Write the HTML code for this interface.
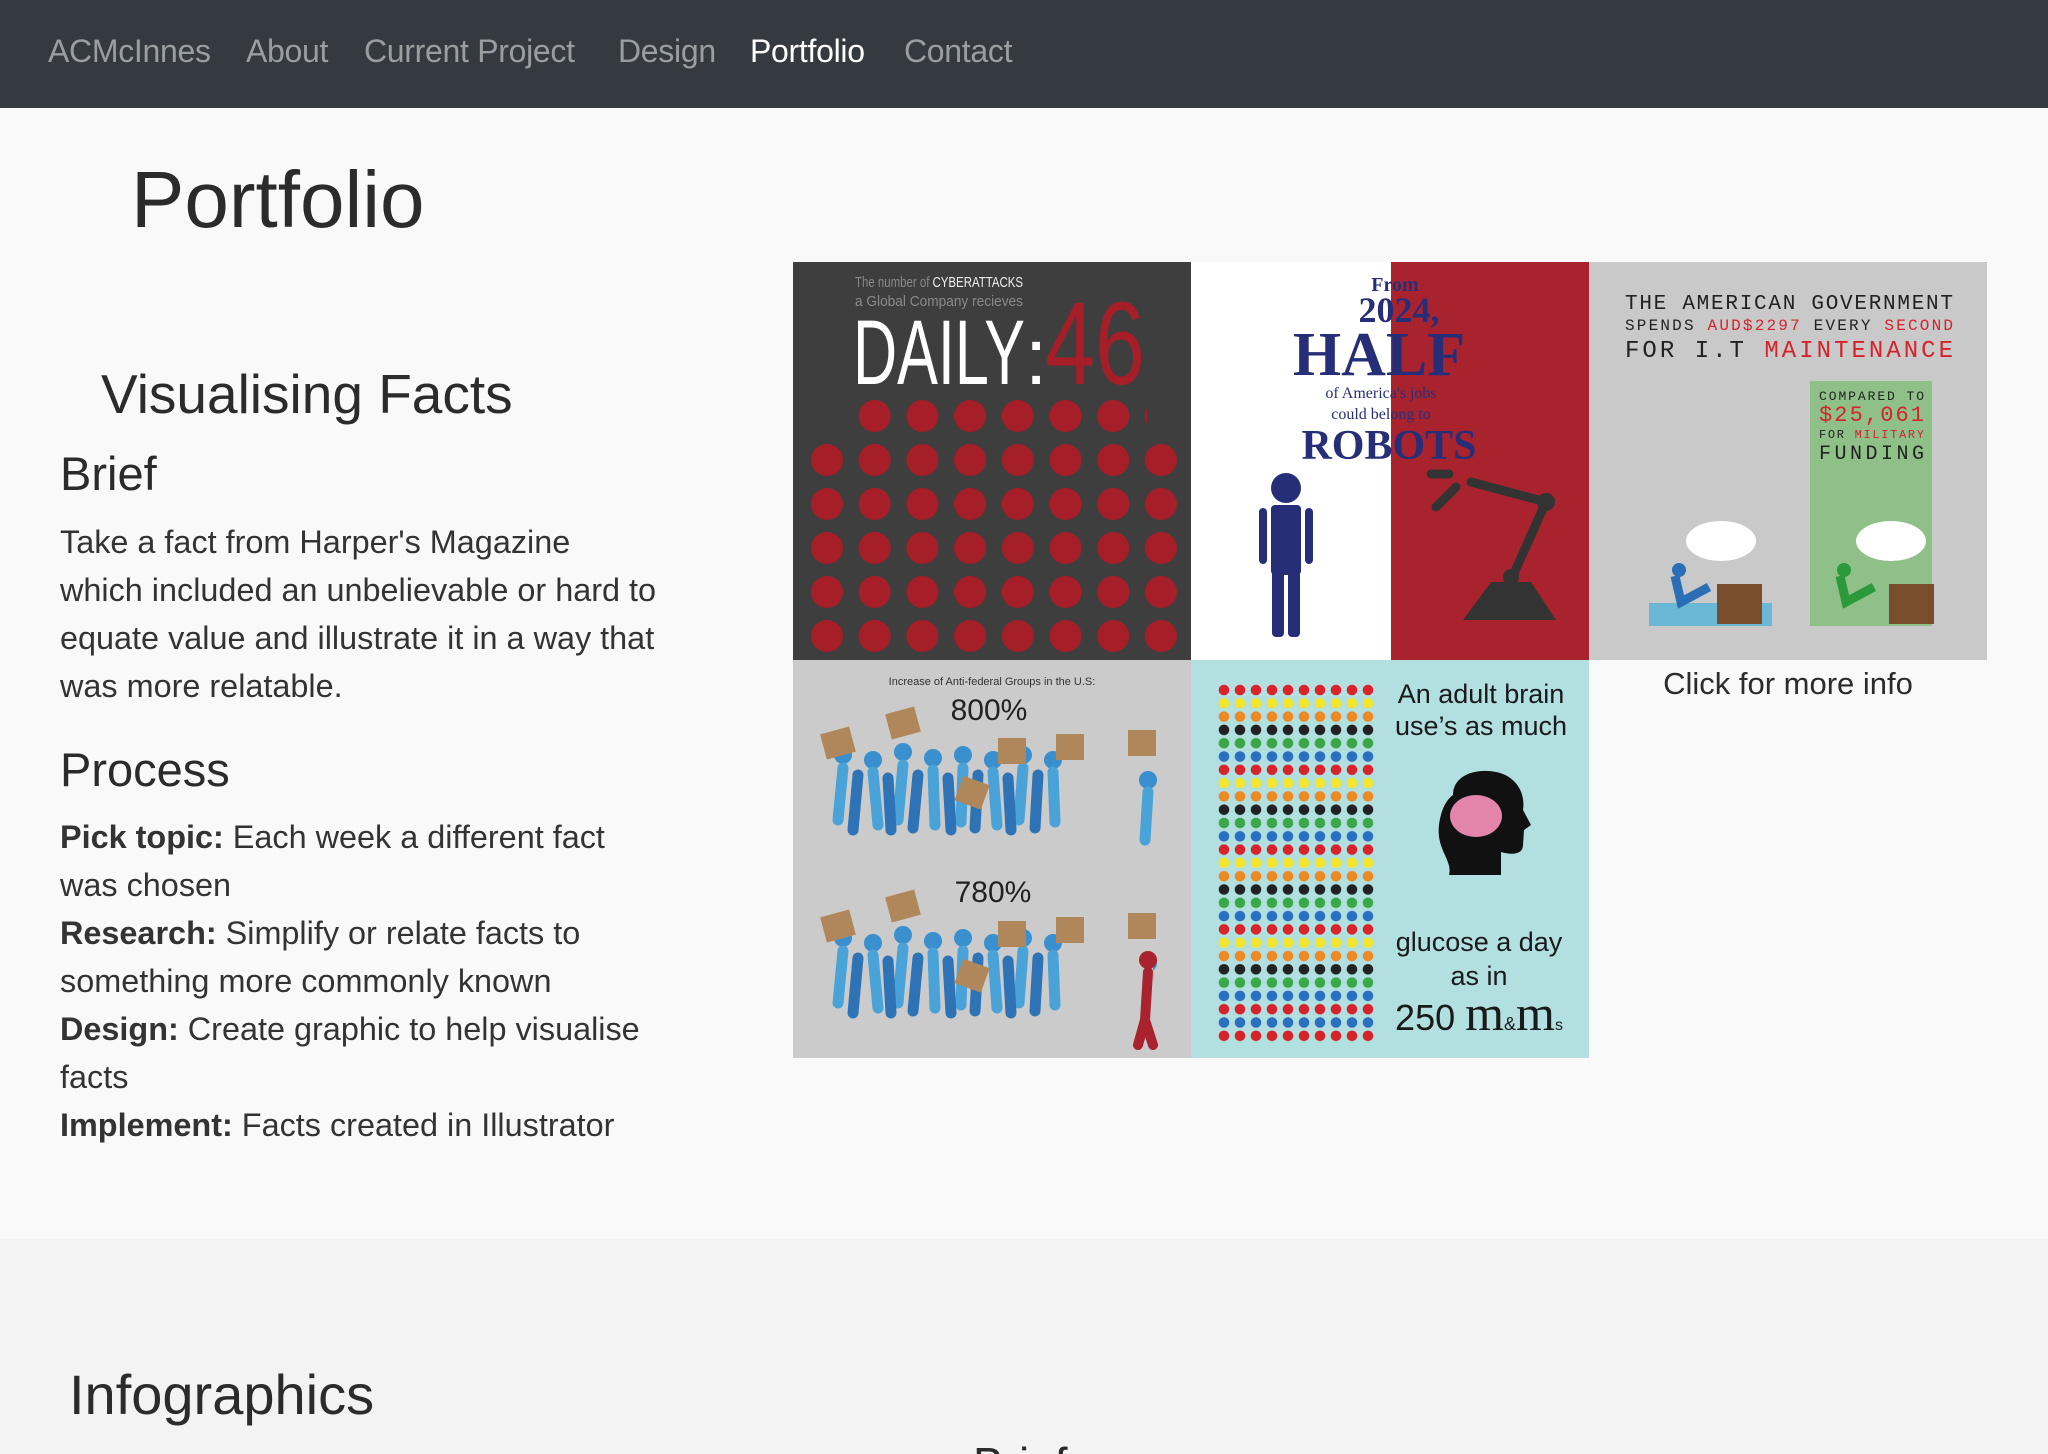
<!DOCTYPE html>
<html><head><meta charset="utf-8">
<style>
*{margin:0;padding:0;box-sizing:border-box}
html,body{width:2048px;height:1454px;overflow:hidden}
body{background:#f9f9f9;font-family:"Liberation Sans",sans-serif;color:#2b2b2b;position:relative}
.nav{position:absolute;left:0;top:0;width:2048px;height:108px;background:#343a40}
.nav span{position:absolute;top:33px;font-size:32px;color:#9b9ea1;white-space:nowrap;letter-spacing:-0.3px}
.nav span.a{color:#fff}
.abs{position:absolute;white-space:nowrap}
h1{position:absolute;left:131px;top:154px;font-size:80px;font-weight:normal;color:#2b2b2b}
.p{position:absolute;left:60px;font-size:32.4px;line-height:48px;color:#333;white-space:nowrap}
.p b{font-weight:bold}
.tile{position:absolute;width:398px;height:398px}
.lower{position:absolute;left:0;top:1239px;width:2048px;height:215px;background:#f3f3f3}
</style></head><body>
<div class="nav">
<span style="left:48px">ACMcInnes</span>
<span style="left:246px">About</span>
<span style="left:364px">Current Project</span>
<span style="left:618px">Design</span>
<span class="a" style="left:750px">Portfolio</span>
<span style="left:904px">Contact</span>
</div>
<h1>Portfolio</h1>
<div class="abs" style="left:101px;top:362px;font-size:55px;color:#2b2b2b">Visualising Facts</div>
<div class="abs" style="left:60px;top:446px;font-size:47px;color:#2b2b2b">Brief</div>
<div class="p" style="top:518px">Take a fact from Harper's Magazine<br>which included an unbelievable or hard to<br>equate value and illustrate it in a way that<br>was more relatable.</div>
<div class="abs" style="left:60px;top:742px;font-size:47px;color:#2b2b2b">Process</div>
<div class="p" style="top:813px"><b>Pick topic:</b> Each week a different fact<br>was chosen<br><b>Research:</b> Simplify or relate facts to<br>something more commonly known<br><b>Design:</b> Create graphic to help visualise<br>facts<br><b>Implement:</b> Facts created in Illustrator</div>

<!-- tile 1 -->
<svg class="tile" style="left:793px;top:262px" viewBox="0 0 398 398">
<defs><pattern id="gp" x="17" y="0" width="47.7" height="44" patternUnits="userSpaceOnUse"><circle cx="17" cy="22" r="16" fill="#a61e27"/></pattern></defs>
<rect width="398" height="398" fill="#3e3e3e"/>
<text x="62" y="25" font-family="Liberation Sans" font-size="15" fill="#8a8a8a" textLength="168" lengthAdjust="spacingAndGlyphs">The number of <tspan fill="#eee">CYBERATTACKS</tspan></text>
<text x="62" y="44" font-family="Liberation Sans" font-size="15" fill="#8a8a8a" textLength="168" lengthAdjust="spacingAndGlyphs">a Global Company recieves</text>
<text x="60" y="122" font-family="Liberation Sans" font-size="92" fill="#fff" textLength="172" lengthAdjust="spacingAndGlyphs">DAILY</text>
<text x="232" y="122" font-family="Liberation Sans" font-size="80" fill="#fff">:</text>
<text x="252" y="122" font-family="Liberation Sans" font-size="118" fill="#a61e27" textLength="100" lengthAdjust="spacingAndGlyphs">46</text>
<rect x="64" y="131" width="290" height="44" fill="url(#gp)"/>
<rect x="17" y="175" width="375" height="222" fill="url(#gp)"/>
</svg>

<!-- tile 2 -->
<svg class="tile" style="left:1191px;top:262px" viewBox="0 0 398 398">
<rect width="398" height="398" fill="#fff"/>
<rect x="200" width="198" height="398" fill="#a8232d"/>
<g font-family="Liberation Serif" fill="#272e78" text-anchor="middle" font-weight="bold">
<text x="204" y="29" font-size="20">From</text>
<text x="208" y="60" font-size="36">2024,</text>
<text x="188" y="113" font-size="62">HALF</text>
<text x="190" y="136" font-size="16" font-weight="normal">of America's jobs</text>
<text x="190" y="157" font-size="16" font-weight="normal">could belong to</text>
<text x="198" y="197" font-size="42">ROBOTS</text>
</g>
<g fill="#272e78"><circle cx="95" cy="226" r="15"/><rect x="80" y="243" width="30" height="70" rx="4"/><rect x="68" y="246" width="8" height="56" rx="4"/><rect x="114" y="246" width="8" height="56" rx="4"/><rect x="81" y="305" width="12" height="70" rx="4"/><rect x="97" y="305" width="12" height="70" rx="4"/></g>
<g stroke="#333" stroke-width="9" fill="none" stroke-linecap="round"><path d="M280 220 L355 240 L320 318"/><path d="M265 225 L245 245 M258 212 L240 212"/></g>
<circle cx="355" cy="240" r="9" fill="#333"/><circle cx="320" cy="315" r="8" fill="#333"/>
<path d="M300 320 L340 320 L365 358 L272 358 Z" fill="#333"/>
</svg>

<!-- tile 3 -->
<svg class="tile" style="left:1589px;top:262px" viewBox="0 0 398 398">
<rect width="398" height="398" fill="#c9c9c9"/>
<g font-family="Liberation Mono">
<text x="36" y="47" font-size="21" fill="#222" textLength="328">THE AMERICAN GOVERNMENT</text>
<text x="36" y="68" font-size="16" fill="#222" textLength="328">SPENDS <tspan fill="#d6222b">AUD$2297</tspan> EVERY <tspan fill="#d6222b">SECOND</tspan></text>
<text x="36" y="95" font-size="24" fill="#222" textLength="328">FOR I.T <tspan fill="#d6222b">MAINTENANCE</tspan></text>
</g>
<rect x="221" y="119" width="122" height="245" fill="#8fc088"/>
<rect x="60" y="341" width="123" height="23" fill="#6bb8d6"/>
<g font-family="Liberation Mono">
<text x="230" y="138" font-size="13" fill="#222" textLength="105">COMPARED TO</text>
<text x="230" y="159" font-size="22" fill="#d6222b" textLength="105">$25,061</text>
<text x="230" y="176" font-size="12" fill="#222" textLength="105">FOR <tspan fill="#d6222b">MILITARY</tspan></text>
<text x="230" y="197" font-size="20" fill="#222" textLength="105">FUNDING</text>
</g>
<ellipse cx="132" cy="279" rx="35" ry="20" fill="#fff"/><ellipse cx="302" cy="279" rx="35" ry="20" fill="#fff"/>
<rect x="128" y="322" width="45" height="40" fill="#7a4e2d"/><rect x="300" y="322" width="45" height="40" fill="#7a4e2d"/>
<circle cx="90" cy="308" r="7" fill="#2a6fb6"/><path d="M86 314 L92 340 L120 325" stroke="#2a6fb6" stroke-width="9" fill="none"/>
<circle cx="255" cy="308" r="7" fill="#2c9a3a"/><path d="M251 314 L257 340 L285 325" stroke="#2c9a3a" stroke-width="9" fill="none"/>
</svg>

<!-- tile 4 -->
<svg class="tile" style="left:793px;top:660px" viewBox="0 0 398 398">
<rect width="398" height="398" fill="#cbcbcb"/>
<text x="199" y="25" font-size="11" text-anchor="middle" fill="#333" font-family="Liberation Sans">Increase of Anti-federal Groups in the U.S:</text>
<text x="196" y="60" font-size="30" text-anchor="middle" fill="#222" font-family="Liberation Sans">800%</text>
<text x="200" y="242" font-size="30" text-anchor="middle" fill="#222" font-family="Liberation Sans">780%</text>
<g id="crowd">
<g fill="#3a8fcf"><circle cx="50" cy="95" r="9"/><circle cx="80" cy="100" r="9"/><circle cx="110" cy="92" r="9"/><circle cx="140" cy="98" r="9"/><circle cx="170" cy="95" r="9"/><circle cx="200" cy="100" r="9"/><circle cx="230" cy="95" r="9"/><circle cx="260" cy="100" r="9"/><circle cx="355" cy="120" r="9"/></g>
<g stroke-width="11" stroke-linecap="round" fill="none">
<path d="M50 108 L45 160 M80 112 L85 165 M110 105 L105 160 M140 110 L142 165 M170 108 L168 162 M200 112 L204 165 M230 108 L226 160 M260 112 L262 162 M355 132 L352 180" stroke="#4aa3d8"/>
<path d="M65 115 L60 170 M95 118 L98 170 M125 115 L120 168 M155 118 L158 170 M185 115 L182 168 M215 118 L218 170 M245 115 L242 168" stroke="#2e73b5"/>
</g>
<g fill="#b0875b"><rect x="30" y="70" width="30" height="26" transform="rotate(-15 45 83)"/><rect x="95" y="50" width="30" height="26" transform="rotate(-15 110 63)"/><rect x="205" y="78" width="28" height="26"/><rect x="263" y="74" width="28" height="26"/><rect x="335" y="70" width="28" height="26"/><rect x="165" y="120" width="28" height="26" transform="rotate(20 180 133)"/></g>
</g>
<use href="#crowd" transform="translate(0,183)"/>
<rect x="340" y="300" width="20" height="80" fill="#cbcbcb"/>
<g stroke="#a8232d" stroke-width="10" fill="none" stroke-linecap="round"><path d="M355 312 L352 360 M352 360 L345 385 M352 360 L360 385"/></g><circle cx="355" cy="300" r="9" fill="#a8232d"/>
</svg>

<!-- tile 5 -->
<svg class="tile" style="left:1191px;top:660px" viewBox="0 0 398 398">
<defs>
<pattern id="d0" width="16" height="14" patternUnits="userSpaceOnUse"><circle cx="6" cy="6" r="5.3" fill="#d9232b"/></pattern>
<pattern id="d1" width="16" height="14" patternUnits="userSpaceOnUse"><circle cx="6" cy="6" r="5.3" fill="#f2e52a"/></pattern>
<pattern id="d2" width="16" height="14" patternUnits="userSpaceOnUse"><circle cx="6" cy="6" r="5.3" fill="#ee8a25"/></pattern>
<pattern id="d3" width="16" height="14" patternUnits="userSpaceOnUse"><circle cx="6" cy="6" r="5.3" fill="#222"/></pattern>
<pattern id="d4" width="16" height="14" patternUnits="userSpaceOnUse"><circle cx="6" cy="6" r="5.3" fill="#3aa846"/></pattern>
<pattern id="d5" width="16" height="14" patternUnits="userSpaceOnUse"><circle cx="6" cy="6" r="5.3" fill="#2a6fc1"/></pattern>
</defs>
<rect width="398" height="398" fill="#b2dfdf"/>
<g transform="translate(27,24)">
<rect width="160" height="14" fill="url(#d0)"/>
<rect width="160" height="14" fill="url(#d1)" transform="translate(0,13.3)"/>
<rect width="160" height="14" fill="url(#d2)" transform="translate(0,26.6)"/>
<rect width="160" height="14" fill="url(#d3)" transform="translate(0,39.9)"/>
<rect width="160" height="14" fill="url(#d4)" transform="translate(0,53.2)"/>
<rect width="160" height="14" fill="url(#d5)" transform="translate(0,66.5)"/>
<rect width="160" height="14" fill="url(#d0)" transform="translate(0,79.8)"/>
<rect width="160" height="14" fill="url(#d1)" transform="translate(0,93.1)"/>
<rect width="160" height="14" fill="url(#d2)" transform="translate(0,106.4)"/>
<rect width="160" height="14" fill="url(#d3)" transform="translate(0,119.7)"/>
<rect width="160" height="14" fill="url(#d4)" transform="translate(0,133)"/>
<rect width="160" height="14" fill="url(#d5)" transform="translate(0,146.3)"/>
<rect width="160" height="14" fill="url(#d0)" transform="translate(0,159.6)"/>
<rect width="160" height="14" fill="url(#d1)" transform="translate(0,172.9)"/>
<rect width="160" height="14" fill="url(#d2)" transform="translate(0,186.2)"/>
<rect width="160" height="14" fill="url(#d3)" transform="translate(0,199.5)"/>
<rect width="160" height="14" fill="url(#d4)" transform="translate(0,212.8)"/>
<rect width="160" height="14" fill="url(#d5)" transform="translate(0,226.1)"/>
<rect width="160" height="14" fill="url(#d0)" transform="translate(0,239.4)"/>
<rect width="160" height="14" fill="url(#d1)" transform="translate(0,252.7)"/>
<rect width="160" height="14" fill="url(#d2)" transform="translate(0,266)"/>
<rect width="160" height="14" fill="url(#d3)" transform="translate(0,279.3)"/>
<rect width="160" height="14" fill="url(#d4)" transform="translate(0,292.6)"/>
<rect width="160" height="14" fill="url(#d5)" transform="translate(0,305.9)"/>
<rect width="160" height="14" fill="url(#d0)" transform="translate(0,319.2)"/>
<rect width="160" height="14" fill="url(#d5)" transform="translate(0,332.5)"/>
<rect width="160" height="14" fill="url(#d0)" transform="translate(0,345.8)"/>
</g>
<g font-family="Liberation Sans" fill="#1a1a1a" text-anchor="middle" font-size="27">
<text x="290" y="43">An adult brain</text>
<text x="290" y="75">use’s as much</text>
<text x="288" y="291">glucose a day</text>
<text x="288" y="325">as in</text>
<text x="288" y="370" font-size="36">250 <tspan font-family="Liberation Serif" font-size="50">m</tspan><tspan font-size="18">&amp;</tspan><tspan font-family="Liberation Serif" font-size="50">m</tspan><tspan font-size="16">s</tspan></text>
</g>
<path d="M262 135 C262 115 285 108 305 112 C322 115 335 130 332 150 L340 165 L333 170 L332 185 C332 195 320 195 310 192 L310 215 L258 215 C262 200 245 190 248 165 C250 150 255 140 262 135 Z" fill="#111"/>
<ellipse cx="285" cy="156" rx="26" ry="21" fill="#e486ac"/>
</svg>

<div class="abs" style="left:1589px;top:666px;width:398px;text-align:center;font-size:31px;color:#2b2b2b">Click for more info</div>

<div class="lower">
<div class="abs" style="left:69px;top:123px;font-size:56px;color:#2b2b2b">Infographics</div>
<div class="abs" style="left:973px;top:198px;font-size:46px;color:#2b2b2b">Brief</div>
</div>
</body></html>
